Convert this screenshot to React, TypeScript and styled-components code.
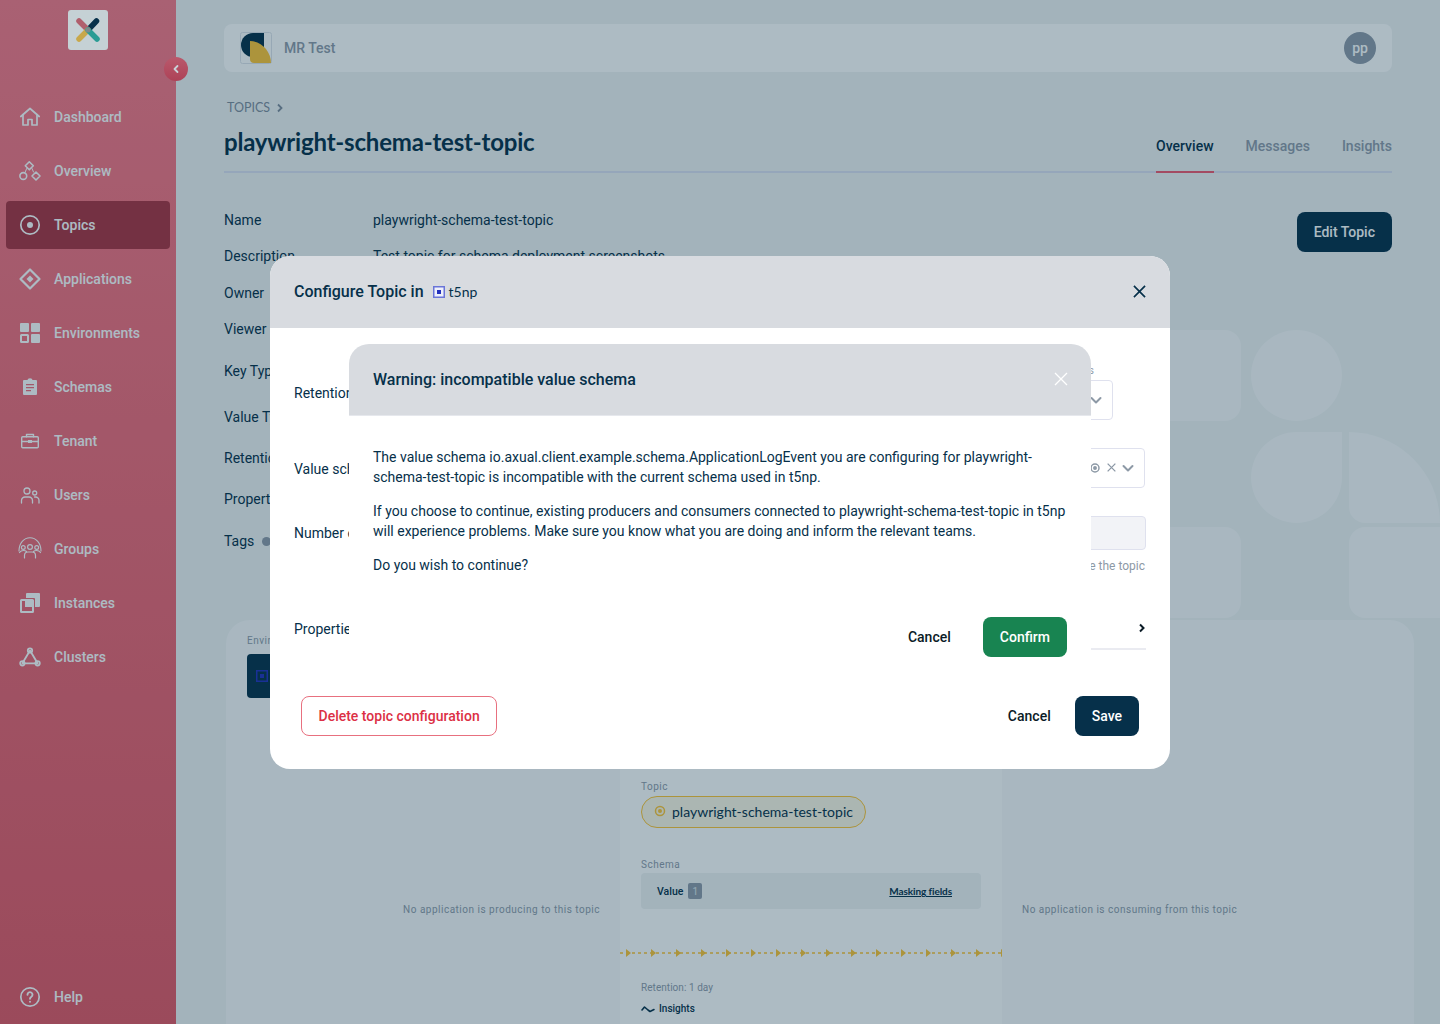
import React from "react";
import styled, { createGlobalStyle } from "styled-components";

const NAVY = "#06304a";
const MUTED = "#8f9aa9";
const GOLD = "#fec536";

const GlobalStyle = createGlobalStyle`
  html, body {
    margin: 0;
    height: 1024px;
    overflow: hidden;
    background: #f0f3f4;
    color: ${NAVY};
    font-family: Roboto, "Liberation Sans", sans-serif;
    font-size: 14px;
  }
  * { box-sizing: border-box; }
`;

const Icon = ({ children }: { children: React.ReactNode }) => (
  <svg width={24} height={24} viewBox="0 0 24 24" fill="none" stroke="currentColor" strokeWidth={1.7} strokeLinecap="round" strokeLinejoin="round">
    {children}
  </svg>
);

// sidebar icons, drawn 1:1 on a 24 box
const navItems: { label: string; icon: React.ReactNode }[] = [
  {
    label: "Dashboard",
    icon: (
      <Icon>
        <path d="M2.800 11.500 12 3.500l9.200 8" />
        <path d="M5 9.500V20h5v-5.500h4V20h5V9.500" />
      </Icon>
    ),
  },
  {
    label: "Overview",
    icon: (
      <Icon>
        <path d="M11.300 2.800l4 4-4 4-4-4z" strokeWidth={1.6} />
        <circle cx="5.300" cy="17" r="3.400" strokeWidth={1.6} />
        <path d="M18 13l4 4-4 4-4-4z" strokeWidth={1.6} />
        <path d="M8.700 9.500 7 13.500M14 9.500l1.500 3.500" strokeWidth={1} />
      </Icon>
    ),
  },
  {
    label: "Topics",
    icon: (
      <Icon>
        <circle cx="12" cy="12" r="9.200" />
        <circle cx="12" cy="12" r="3" fill="currentColor" stroke="none" />
      </Icon>
    ),
  },
  {
    label: "Applications",
    icon: (
      <Icon>
        <path d="M12 2.500 21.500 12 12 21.500 2.500 12z" strokeWidth={2.2} />
        <path d="M12 8.500 15.500 12 12 15.500 8.500 12z" fill="currentColor" stroke="none" />
      </Icon>
    ),
  },
  {
    label: "Environments",
    icon: (
      <Icon>
        <rect x="2" y="2" width="9" height="9" rx="1" fill="currentColor" stroke="none" />
        <rect x="13" y="2" width="9" height="9" rx="1" fill="currentColor" stroke="none" />
        <rect x="3" y="14" width="7" height="7" rx="0.500" strokeWidth={2} />
        <rect x="13" y="13" width="9" height="9" rx="1" fill="currentColor" stroke="none" />
      </Icon>
    ),
  },
  {
    label: "Schemas",
    icon: (
      <Icon>
        <path
          fillRule="evenodd"
          stroke="none"
          fill="currentColor"
          d="M9.500 5a2.500 1.700 0 0 1 5 0H18a1 1 0 0 1 1 1v13a1 1 0 0 1-1 1H6a1 1 0 0 1-1-1V6a1 1 0 0 1 1-1zM8 9v1.300h8V9zm0 3v1.300h8V12zm0 3v1.300h5V15z"
        />
      </Icon>
    ),
  },
  {
    label: "Tenant",
    icon: (
      <Icon>
        <rect x="3.700" y="7.700" width="16.600" height="11" rx="1" strokeWidth={1.4} />
        <path d="M8.500 7.700V5.500h7v2.200M3.700 12.500h16.600" strokeWidth={1.4} />
        <rect x="10" y="11" width="4" height="3" fill="currentColor" stroke="none" />
      </Icon>
    ),
  },
  {
    label: "Users",
    icon: (
      <Icon>
        <circle cx="9" cy="8" r="3" strokeWidth={1.3} />
        <path d="M3.500 20v-2.500a3.500 3.500 0 0 1 3.500-3.500h4a3.500 3.500 0 0 1 3.500 3.500V20" strokeWidth={1.3} />
        <circle cx="16.700" cy="10" r="2" strokeWidth={1.3} />
        <path d="M16.500 14h1a3.500 3.500 0 0 1 3.500 3.500V20" strokeWidth={1.3} />
      </Icon>
    ),
  },
  {
    label: "Groups",
    icon: (
      <Icon>
        <path d="M1 14C1 6 6 .8 12 .8S23 6 23 14" strokeWidth={1.1} />
        <circle cx="12" cy="10" r="2.400" strokeWidth={1.2} />
        <circle cx="5.300" cy="10.500" r="1.900" strokeWidth={1.2} />
        <circle cx="18.700" cy="10.500" r="1.900" strokeWidth={1.2} />
        <path d="M6.500 21v-2.500a3.500 3.500 0 0 1 3.500-3.500h4a3.500 3.500 0 0 1 3.500 3.500V21" strokeWidth={1.2} />
        <path d="M1.500 15.500c1-1.500 2.500-2 4-2s2.500.5 3 1M22.500 15.500c-1-1.500-2.500-2-4-2s-2.500.5-3 1" strokeWidth={1.2} />
      </Icon>
    ),
  },
  {
    label: "Instances",
    icon: (
      <Icon>
        <path d="M8 3a1 1 0 0 1 1-1h12a1 1 0 0 1 1 1v12a1 1 0 0 1-1 1h-4V8a1 1 0 0 0-1-1H8z" fill="currentColor" stroke="none" />
        <rect x="3" y="9" width="12" height="12" rx="0.500" strokeWidth={2} />
        <rect x="7" y="10" width="7" height="6" fill="currentColor" stroke="none" />
      </Icon>
    ),
  },
  {
    label: "Clusters",
    icon: (
      <Icon>
        <path d="M12 5.500 4.400 18.300h15.200z" strokeWidth={1.8} />
        <circle cx="12" cy="5.500" r="2.200" strokeWidth={1.8} />
        <circle cx="4.400" cy="18.300" r="2.200" strokeWidth={1.8} />
        <circle cx="19.600" cy="18.300" r="2.200" strokeWidth={1.8} />
      </Icon>
    ),
  },
];

const Shell = styled.div`
  display: flex;
  width: 1440px;
  height: 1024px;
  overflow: hidden;
`;

const Sidebar = styled.aside`
  display: flex;
  flex-direction: column;
  flex: 0 0 176px;
  position: relative;
  padding: 0 6px;
  background: linear-gradient(180deg, #fa7988 0%, #e45765 100%);
`;

const LogoTile = styled.div`
  position: relative;
  z-index: 11;
  display: flex;
  align-items: center;
  justify-content: center;
  align-self: center;
  width: 40px;
  height: 40px;
  margin-top: 10px;
  border-radius: 3px;
  background: #c5d1d5;
`;

const CollapseButton = styled.div`
  position: absolute;
  z-index: 11;
  top: 57px;
  right: -12px;
  display: flex;
  align-items: center;
  justify-content: center;
  width: 24px;
  height: 24px;
  border-radius: 50%;
  background: linear-gradient(180deg, #b9596c 0%, #ad4257 100%);
  color: #c9d3d8;
`;

const NavList = styled.nav`
  display: flex;
  flex-direction: column;
  margin-top: 43px;
  gap: 6px;
`;

const NavItem = styled.div<{ $active?: boolean }>`
  display: flex;
  align-items: center;
  height: 48px;
  padding-left: 14px;
  border-radius: 4px;
  background: ${({ $active }) => ($active ? "#ab3241" : "transparent")};
  color: #fff;
  font-size: 14px;
  font-weight: 500;
`;

const NavIcon = styled.span`
  display: flex;
  align-items: center;
  justify-content: center;
  width: 20px;
  margin-right: 14px;

  svg {
    flex: none;
  }
`;

const HelpItem = styled(NavItem)`
  margin-top: auto;
  margin-bottom: 3px;
`;

const Main = styled.main`
  position: relative;
  flex: 1;
  min-width: 0;
  padding: 24px 48px 0;
`;

const Pattern = styled.svg`
  position: absolute;
  top: 330px;
  right: 0;
`;

const TopBar = styled.header`
  position: relative;
  display: flex;
  align-items: center;
  height: 48px;
  padding: 0 16px;
  border-radius: 8px;
  background: #fff;
`;

const OrgName = styled.span`
  margin-left: 12px;
  color: ${MUTED};
  font-size: 14px;
  font-weight: 500;
`;

const Avatar = styled.div`
  display: flex;
  align-items: center;
  justify-content: center;
  width: 32px;
  height: 32px;
  margin-left: auto;
  border-radius: 50%;
  background: ${MUTED};
  color: #fff;
  font-size: 14px;
  font-weight: 500;
`;

const Breadcrumb = styled.div`
  position: relative;
  display: flex;
  align-items: center;
  gap: 6px;
  margin: 28px 0 0 3px;
  color: #7f8c9c;
  font-family: Lato, sans-serif;
  font-size: 12.5px;
  line-height: 16px;
`;

const PageHead = styled.div`
  position: relative;
  display: flex;
  justify-content: space-between;
  align-items: flex-end;
  height: 57px;
  border-bottom: 2px solid #dce0f2;
`;

const PageTitle = styled.h1`
  margin: 0 0 14px;
  color: ${NAVY};
  font-family: Lato, sans-serif;
  font-size: 24px;
  font-weight: 700;
  letter-spacing: -0.2px;
  line-height: 30px;
`;

const Tabs = styled.div`
  display: flex;
  gap: 32px;
  margin-bottom: -2px;
`;

const Tab = styled.div<{ $active?: boolean }>`
  height: 38px;
  padding-top: 1px;
  border-bottom: 2px solid ${({ $active }) => ($active ? "#f0596f" : "transparent")};
  color: ${({ $active }) => ($active ? NAVY : MUTED)};
  font-size: 14px;
  font-weight: 500;
  line-height: 20px;
`;

const InfoSection = styled.section`
  position: relative;
  display: flex;
  justify-content: space-between;
  align-items: flex-start;
  margin-top: 37px;
`;

const InfoList = styled.div`
  display: flex;
  flex-direction: column;
`;

const InfoRow = styled.div<{ $height: number }>`
  display: flex;
  height: ${({ $height }) => $height}px;
  line-height: 20px;
`;

const InfoLabel = styled.span`
  display: flex;
  align-items: flex-start;
  flex: 0 0 149px;
`;

const TagHint = styled.i`
  width: 9px;
  height: 9px;
  margin: 6px 0 0 8px;
  border-radius: 50%;
  background: ${MUTED};
`;

const PrimaryButton = styled.button`
  height: 40px;
  padding: 0 17px;
  border: 0;
  border-radius: 8px;
  background: ${NAVY};
  color: #fff;
  font-family: inherit;
  font-size: 14px;
  font-weight: 500;
`;

const EditButton = styled(PrimaryButton)`
  margin-top: 2px;
`;

const FlowCard = styled.section`
  position: relative;
  display: flex;
  height: 500px;
  margin: 69px -22px 0 2px;
  border-radius: 24px;
  background: #f9fafb;
  overflow: hidden;
`;

const LeftColumn = styled.div`
  flex: 0 0 394px;
  padding: 15px 20px 0 21px;
`;

const RightColumn = styled.div`
  flex: 1;
  padding: 284px 0 0 20px;
`;

const SmallLabel = styled.div`
  color: ${MUTED};
  font-size: 10px;
  letter-spacing: 0.5px;
  line-height: 12px;
`;

const EnvBox = styled.div`
  display: flex;
  align-items: center;
  width: 200px;
  height: 44px;
  margin-top: 7px;
  padding-left: 9px;
  border-radius: 4px;
  background: ${NAVY};
  color: #fff;
`;

const LeftEmpty = styled(SmallLabel)`
  margin-top: 206px;
  text-align: right;
`;

const MiddleColumn = styled.div`
  flex: 0 0 382px;
  padding: 161px 0 0;
  background: #fff;
`;

const MiddleInset = styled.div`
  padding: 0 21px 0;
`;

const TopicPill = styled.div`
  display: inline-flex;
  align-items: center;
  gap: 6px;
  height: 32px;
  margin-top: 3px;
  padding: 0 12px 2px;
  border: 1px solid ${GOLD};
  border-radius: 16px;
  background: #fcf8e6;
  color: ${NAVY};
  font-family: Lato, sans-serif;
  font-size: 14px;
`;

const SchemaLabel = styled(SmallLabel)`
  margin-top: 31px;
`;

const SchemaBox = styled.div`
  display: flex;
  align-items: center;
  height: 36px;
  margin-top: 2px;
  padding: 0 29px 0 16px;
  border-radius: 4px;
  background: #f0f3f4;
`;

const SchemaName = styled.span`
  font-size: 10.5px;
  font-weight: 500;
`;

const VersionBadge = styled.span`
  display: flex;
  align-items: center;
  justify-content: center;
  width: 14px;
  height: 16px;
  margin-left: 5px;
  border-radius: 2px;
  background: ${MUTED};
  color: #dfe5ea;
  font-size: 10px;
`;

const MaskLink = styled.a`
  margin-left: auto;
  color: ${NAVY};
  font-family: Lato, sans-serif;
  font-size: 10px;
  font-weight: 700;
  letter-spacing: -0.1px;
  text-decoration: underline;
`;

const FlowLine = styled.svg`
  display: block;
  margin-top: 38px;
`;

const RetentionNote = styled(SmallLabel)`
  margin-top: 23px;
  letter-spacing: 0.05px;
`;

const InsightsLink = styled.div`
  display: flex;
  align-items: center;
  gap: 4px;
  margin-top: 8px;
  font-size: 10px;
  font-weight: 500;
  line-height: 13px;
`;

const Backdrop = styled.div`
  position: fixed;
  inset: 0;
  z-index: 10;
  background: rgba(6, 48, 74, 0.33);
`;

const ModalLayer = styled.div<{ $z: number }>`
  position: fixed;
  inset: 0;
  z-index: ${({ $z }) => $z};
  display: flex;
  align-items: center;
  justify-content: center;
`;

const Modal = styled.div<{ $width: number }>`
  width: ${({ $width }) => $width}px;
  border-radius: 20px;
  background: #fff;
  overflow: hidden;
`;

const ModalHeader = styled.div<{ $height: number }>`
  display: flex;
  align-items: center;
  height: ${({ $height }) => $height}px;
  padding: 0 24px;
  background: #d8dbe0;
`;

const ModalTitle = styled.h2`
  margin: 0;
  color: ${NAVY};
  font-size: 16px;
  font-weight: 500;
`;

const EnvTag = styled.span`
  display: inline-flex;
  align-items: center;
  gap: 4px;
  margin-left: 9px;
  color: ${NAVY};
  font-family: Lato, sans-serif;
  font-size: 14px;
`;

const CloseButton = styled.span<{ $light?: boolean }>`
  display: flex;
  margin-left: auto;
  margin-right: ${({ $light }) => ($light ? "-1px" : "0")};
  color: ${({ $light }) => ($light ? "#fff" : NAVY)};
`;

const ConfigBody = styled.div`
  display: flex;
  flex-direction: column;
  height: 368px;
  padding: 36px 24px 0;
`;

const FieldRow = styled.div<{ $top: number }>`
  display: flex;
  align-items: flex-end;
  margin-top: ${({ $top }) => $top}px;
`;

const FieldLabel = styled.span<{ $nudge?: boolean }>`
  flex: 0 0 180px;
  align-self: center;
  padding-top: ${({ $nudge }) => ($nudge ? "2px" : "0")};
  line-height: 20px;
`;

const FieldStack = styled.div`
  flex: 1;
  min-width: 0;
`;

const UnitField = styled.div`
  width: 140px;
  margin-left: auto;
  margin-right: 33px;
`;

const TinyLabel = styled.div`
  height: 16px;
  padding-right: 19px;
  color: #8d99a6;
  font-size: 10px;
  line-height: 14px;
  text-align: right;
`;

const SelectBox = styled.div`
  display: flex;
  align-items: center;
  justify-content: flex-end;
  gap: 6px;
  height: 40px;
  padding: 0 10px;
  border: 1px solid #dfe1ee;
  border-radius: 4px;
  background: #fff;
  color: #8d99a6;
`;

const SchemaSelect = styled(SelectBox)`
  margin-right: 1px;
`;

const ReadOnlyInput = styled.div`
  height: 34px;
  border: 1px solid #dfe1ee;
  border-radius: 4px;
  background: #f2f3f7;
`;

const HelpText = styled.div`
  margin-top: 8px;
  padding-right: 1px;
  color: #8d99a6;
  font-size: 12px;
  line-height: 16px;
  text-align: right;
`;

const PropertiesRow = styled.div`
  display: flex;
  margin-top: 35px;
`;

const PropertiesField = styled.div`
  display: flex;
  align-items: center;
  justify-content: flex-end;
  flex: 1;
  height: 41px;
  border-bottom: 2px solid #eaebf1;
`;

const ModalFooter = styled.div<{ $padding: string }>`
  display: flex;
  align-items: center;
  justify-content: flex-end;
  padding: ${({ $padding }) => $padding};
`;

const DangerButton = styled.button`
  height: 40px;
  margin-right: auto;
  padding: 0 16.5px;
  border: 1px solid #e8707f;
  border-radius: 8px;
  background: #fff;
  color: #dc3045;
  font-family: inherit;
  font-size: 14px;
  font-weight: 500;
`;

const TextButton = styled.button<{ $gap: number }>`
  height: 40px;
  margin-right: ${({ $gap }) => $gap}px;
  padding: 0;
  border: 0;
  background: none;
  color: #0b1b26;
  font-family: inherit;
  font-size: 14px;
  font-weight: 500;
`;

const ConfirmButton = styled(PrimaryButton)`
  background: #188451;
`;

const WarningHeader = styled(ModalHeader)`
  border-bottom: 1px solid #e6e8ed;
`;

const WarningBody = styled.div`
  padding: 31px 24px 0;
  line-height: 20px;

  p {
    margin: 0 0 14px;
  }
`;

const EnvGlyph = () => (
  <svg width="12" height="12" viewBox="0 0 12 12">
    <rect x="0.750" y="0.750" width="10.500" height="10.500" fill="#eef0fb" stroke="#6a75d8" strokeWidth="1.500" />
    <rect x="4" y="4" width="4" height="4" fill="#2330bd" />
  </svg>
);

const CrossIcon = ({ size, width }: { size: number; width: number }) => (
  <svg width={size} height={size} viewBox="0 0 14 14" fill="none" stroke="currentColor" strokeWidth={width}>
    <path d="M1 1l12 12M13 1 1 13" />
  </svg>
);

const Chevron = () => (
  <svg width={12} height={12} viewBox="0 0 12 12" fill="none" stroke="currentColor" strokeWidth="2" strokeLinecap="round" strokeLinejoin="round">
    <path d="M1.500 4 6 8.500 10.500 4" />
  </svg>
);

const ARROWS = Array.from({ length: 16 }, (_, i) => 6 + i * 25);

const App = () => (
  <>
    <GlobalStyle />
    <Shell>
      <Sidebar>
        <LogoTile>
          <svg width="28" height="28" viewBox="0 0 28 28" fill="none" strokeWidth="5.500" strokeLinecap="round">
            <path d="M14 14 22.500 5" stroke="#06304a" />
            <path d="M14 14 5 5" stroke="#b05f6d" />
            <path d="M14 14 5 23" stroke="#c8a84b" />
            <path d="M14 14 23 23" stroke="#2a9c94" />
            <circle cx="14" cy="14" r="2.500" fill="#7d8a8c" />
          </svg>
        </LogoTile>
        <CollapseButton>
          <svg width="10" height="10" viewBox="0 0 10 10" fill="none" stroke="currentColor" strokeWidth="1.800" strokeLinecap="round" strokeLinejoin="round">
            <path d="M6.500 2 3.500 5l3 3" />
          </svg>
        </CollapseButton>
        <NavList>
          {navItems.map((item) => (
            <NavItem key={item.label} $active={item.label === "Topics"}>
              <NavIcon>{item.icon}</NavIcon>
              {item.label}
            </NavItem>
          ))}
        </NavList>
        <HelpItem>
          <NavIcon>
            <Icon>
              <circle cx="12" cy="12" r="9.200" />
              <path d="M9.500 9.700a2.500 2.500 0 1 1 3.800 2.100c-.9.5-1.300 1-1.300 2" strokeWidth={1.9} />
              <circle cx="12" cy="16.700" r="1" fill="currentColor" stroke="none" />
            </Icon>
          </NavIcon>
          Help
        </HelpItem>
      </Sidebar>

      <Main>
        <Pattern width="270" height="289" viewBox="0 0 270 289" fill="#fff" fillOpacity="0.6">
          <path d="M0 0h55a16 16 0 0 1 16 16v59a16 16 0 0 1-16 16H0z" />
          <circle cx="126.500" cy="45.500" r="45.500" />
          <path d="M126.500 102H172v45.500a45.500 45.500 0 0 1-91 0A45.500 45.500 0 0 1 126.500 102z" />
          <path d="M179 102c50 0 91 41 91 91h-75a16 16 0 0 1-16-16z" />
          <path d="M0 197h55a16 16 0 0 1 16 16v59a16 16 0 0 1-16 16H0z" />
          <path d="M195 197h75v91h-75a16 16 0 0 1-16-16v-59a16 16 0 0 1 16-16z" />
        </Pattern>

        <TopBar>
          <svg width="32" height="32" viewBox="0 0 32 32">
            <rect x="0.500" y="0.500" width="31" height="31" rx="2" fill="none" stroke="#dfe3ea" />
            <path d="M24 1H13a12 12 0 0 0 0 24h11z" fill="#06304a" />
            <path d="M10 9c11 0 21 10 21 22H14a4 4 0 0 1-4-4z" fill={GOLD} />
          </svg>
          <OrgName>MR Test</OrgName>
          <Avatar>pp</Avatar>
        </TopBar>

        <Breadcrumb>
          TOPICS
          <svg width="8" height="10" viewBox="0 0 8 10" fill="none" stroke="currentColor" strokeWidth="1.800">
            <path d="M2 1.500 5.500 5 2 8.500" />
          </svg>
        </Breadcrumb>

        <PageHead>
          <PageTitle>playwright-schema-test-topic</PageTitle>
          <Tabs>
            <Tab $active>Overview</Tab>
            <Tab>Messages</Tab>
            <Tab>Insights</Tab>
          </Tabs>
        </PageHead>

        <InfoSection>
          <InfoList>
            <InfoRow $height={36}>
              <InfoLabel>Name</InfoLabel>
              <span>playwright-schema-test-topic</span>
            </InfoRow>
            <InfoRow $height={37}>
              <InfoLabel>Description</InfoLabel>
              <span>Test topic for schema deployment screenshots</span>
            </InfoRow>
            <InfoRow $height={36}>
              <InfoLabel>Owner</InfoLabel>
            </InfoRow>
            <InfoRow $height={42}>
              <InfoLabel>Viewer</InfoLabel>
            </InfoRow>
            <InfoRow $height={46}>
              <InfoLabel>Key Type</InfoLabel>
            </InfoRow>
            <InfoRow $height={41}>
              <InfoLabel>Value Type</InfoLabel>
            </InfoRow>
            <InfoRow $height={41}>
              <InfoLabel>Retention</InfoLabel>
            </InfoRow>
            <InfoRow $height={42}>
              <InfoLabel>Properties</InfoLabel>
            </InfoRow>
            <InfoRow $height={20}>
              <InfoLabel>
                Tags
                <TagHint />
              </InfoLabel>
            </InfoRow>
          </InfoList>
          <EditButton>Edit Topic</EditButton>
        </InfoSection>

        <FlowCard>
          <LeftColumn>
            <SmallLabel>Environment</SmallLabel>
            <EnvBox>
              <svg width="12" height="12" viewBox="0 0 12 12">
                <rect x="0.750" y="0.750" width="10.500" height="10.500" fill="none" stroke="#2330bd" strokeWidth="1.500" />
                <rect x="4" y="4" width="4" height="4" fill="#2330bd" />
              </svg>
            </EnvBox>
            <LeftEmpty>No application is producing to this topic</LeftEmpty>
          </LeftColumn>

          <MiddleColumn>
            <MiddleInset>
              <SmallLabel>Topic</SmallLabel>
              <TopicPill>
                <svg width="12" height="12" viewBox="0 0 12 12" fill="none">
                  <circle cx="6" cy="6" r="4.500" stroke={GOLD} strokeWidth="1.500" />
                  <circle cx="6" cy="6" r="2" fill={GOLD} />
                </svg>
                playwright-schema-test-topic
              </TopicPill>
              <SchemaLabel>Schema</SchemaLabel>
              <SchemaBox>
                <SchemaName>Value</SchemaName>
                <VersionBadge>1</VersionBadge>
                <MaskLink>Masking fields</MaskLink>
              </SchemaBox>
            </MiddleInset>
            <FlowLine width="382" height="12" viewBox="0 0 382 12">
              <line x1="0" y1="6" x2="382" y2="6" stroke={GOLD} strokeWidth="1.300" strokeDasharray="3 3" />
              {ARROWS.map((x) => (
                <path key={x} d={`M${x} 2l5 4-5 4z`} fill={GOLD} />
              ))}
            </FlowLine>
            <MiddleInset>
              <RetentionNote>Retention: 1 day</RetentionNote>
              <InsightsLink>
                <svg width="14" height="8" viewBox="0 0 14 8" fill="none" stroke={NAVY} strokeWidth="1.600" strokeLinecap="round" strokeLinejoin="round">
                  <path d="M1 5 3.500 2 7 5l2 1.500L13 4.500" />
                </svg>
                Insights
              </InsightsLink>
            </MiddleInset>
          </MiddleColumn>

          <RightColumn>
            <SmallLabel>No application is consuming from this topic</SmallLabel>
          </RightColumn>
        </FlowCard>
      </Main>
    </Shell>

    <Backdrop />

    <ModalLayer $z={20}>
      <Modal $width={900}>
        <ModalHeader $height={72}>
          <ModalTitle>Configure Topic in</ModalTitle>
          <EnvTag>
            <EnvGlyph />
            t5np
          </EnvTag>
          <CloseButton>
            <CrossIcon size={13} width={1.8} />
          </CloseButton>
        </ModalHeader>
        <ConfigBody>
          <FieldRow $top={0}>
            <FieldLabel $nudge>Retention time</FieldLabel>
            <UnitField>
              <TinyLabel>Units</TinyLabel>
              <SelectBox>
                <Chevron />
              </SelectBox>
            </UnitField>
          </FieldRow>
          <FieldRow $top={28}>
            <FieldLabel $nudge>Value schema</FieldLabel>
            <FieldStack>
              <SchemaSelect>
                <svg width="12" height="12" viewBox="0 0 12 12" fill="none" stroke="currentColor" strokeWidth="1.500">
                  <circle cx="6" cy="6" r="4" />
                  <circle cx="6" cy="6" r="1.200" fill="currentColor" />
                </svg>
                <CrossIcon size={9} width={2} />
                <Chevron />
              </SchemaSelect>
            </FieldStack>
          </FieldRow>
          <FieldRow $top={28}>
            <FieldLabel>Number of partitions</FieldLabel>
            <FieldStack>
              <ReadOnlyInput />
            </FieldStack>
          </FieldRow>
          <HelpText>Number of partitions to divide the topic</HelpText>
          <PropertiesRow>
            <FieldLabel>Properties</FieldLabel>
            <PropertiesField>
              <svg width="8" height="10" viewBox="0 0 8 10" fill="none" stroke="#0b1b26" strokeWidth="2">
                <path d="M2 1.500 5.500 5 2 8.500" />
              </svg>
            </PropertiesField>
          </PropertiesRow>
        </ConfigBody>
        <ModalFooter $padding="0 31px 33px">
          <DangerButton>Delete topic configuration</DangerButton>
          <TextButton $gap={24}>Cancel</TextButton>
          <PrimaryButton>Save</PrimaryButton>
        </ModalFooter>
      </Modal>
    </ModalLayer>

    <ModalLayer $z={30}>
      <Modal $width={742}>
        <WarningHeader $height={72}>
          <ModalTitle>Warning: incompatible value schema</ModalTitle>
          <CloseButton $light>
            <CrossIcon size={14} width={1.3} />
          </CloseButton>
        </WarningHeader>
        <WarningBody>
          <p>
            The value schema io.axual.client.example.schema.ApplicationLogEvent you are configuring for playwright-schema-test-topic is incompatible with the current schema used in t5np.
          </p>
          <p>
            If you choose to continue, existing producers and consumers connected to playwright-schema-test-topic in t5np will experience problems. Make sure you know what you are doing and inform the relevant teams.
          </p>
          <p>Do you wish to continue?</p>
        </WarningBody>
        <ModalFooter $padding="28px 24px 24px">
          <TextButton $gap={32}>Cancel</TextButton>
          <ConfirmButton>Confirm</ConfirmButton>
        </ModalFooter>
      </Modal>
    </ModalLayer>
  </>
);

export default App;
